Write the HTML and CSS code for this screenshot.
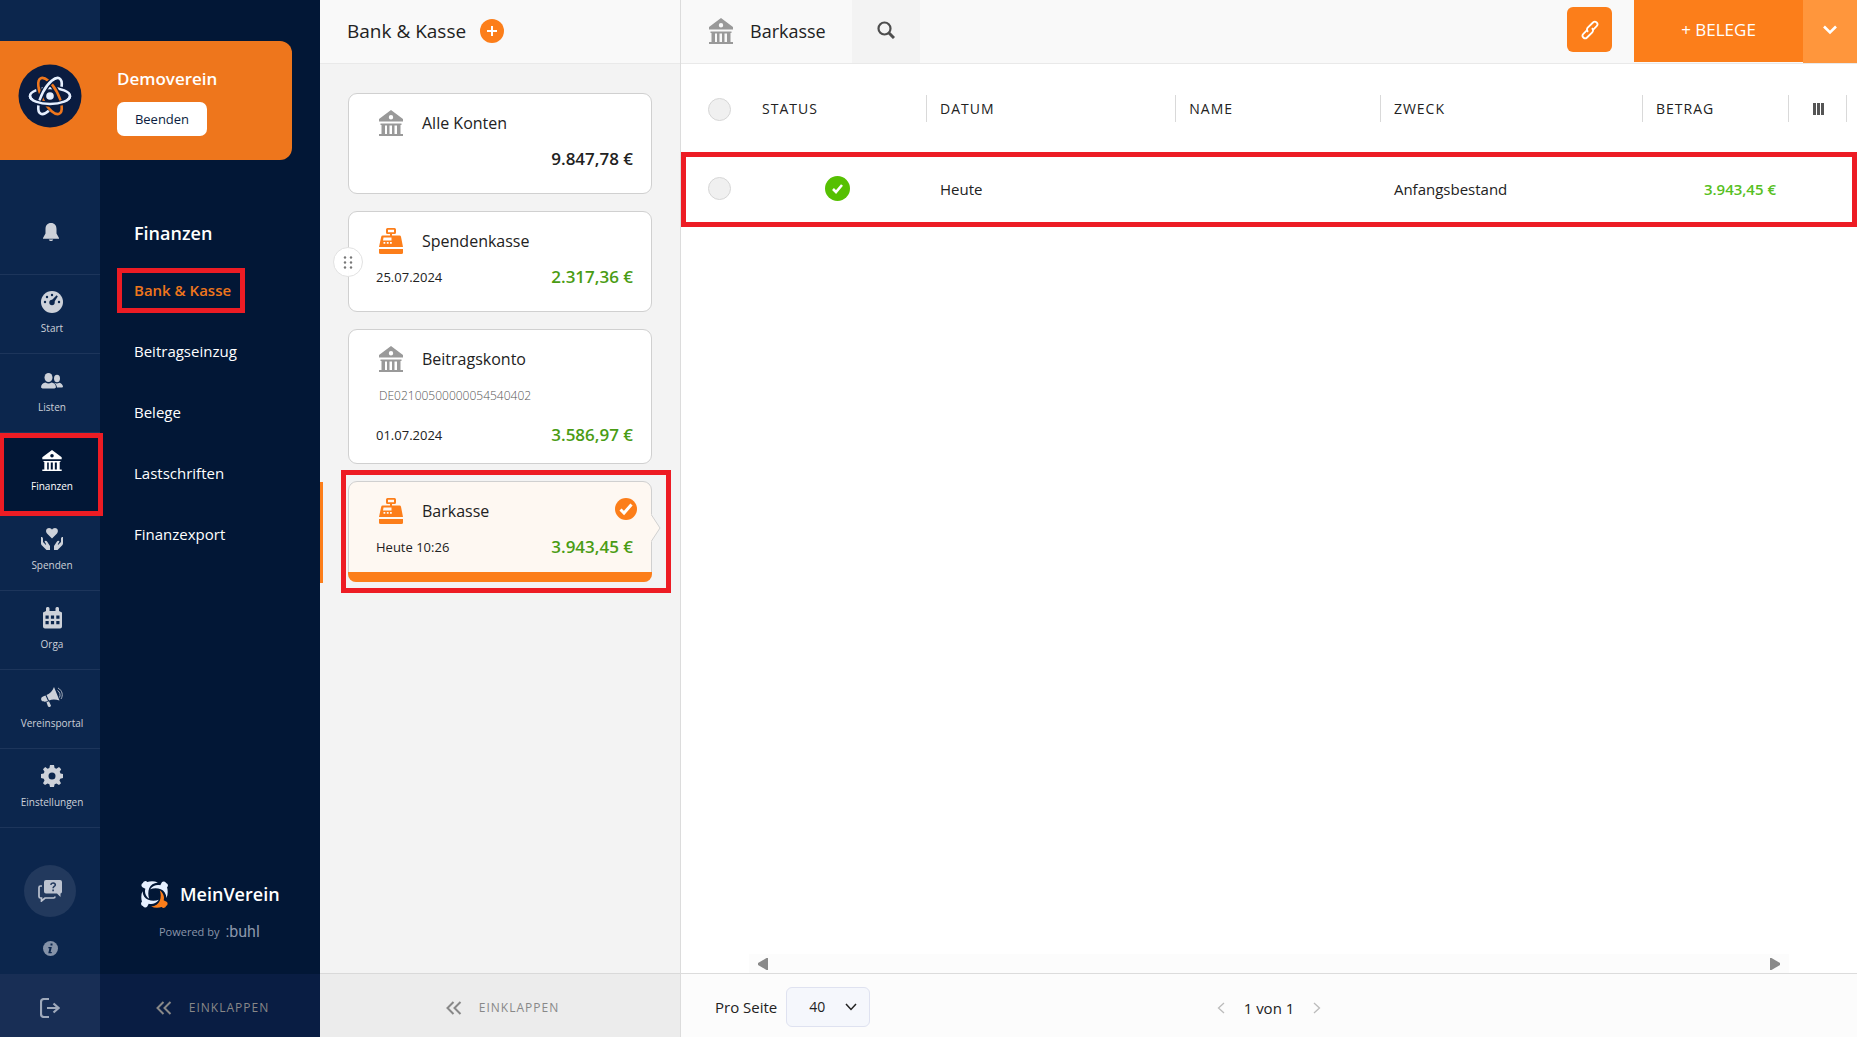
FILE: index.html
```html
<!DOCTYPE html>
<html lang="de">
<head>
<meta charset="utf-8">
<meta name="viewport" content="width=device-width, initial-scale=1">
<title>MeinVerein – Bank &amp; Kasse</title>
<link rel="stylesheet" href="styles.css">
</head>
<body>
<svg class="sprite" aria-hidden="true">
  <symbol id="bank" viewBox="0 0 24 26">
    <path fill-rule="evenodd" d="M12 0 24 9v2.600H0V9zM12 5a2.200 2.200 0 1 0 0 4.400A2.200 2.200 0 0 0 12 5z"/>
    <path d="M1.500 13.500h21V15h-1v9H24v2H0v-2h2.500v-9h-1zM6 15.500V24h2v-8.500zm4.500 0V24H13v-8.500zm5 0V24h2.500v-8.500z" fill-rule="evenodd"/>
  </symbol>
  <symbol id="register" viewBox="0 0 24 26">
    <path fill-rule="evenodd" d="M8.500 0h7A1.500 1.500 0 0 1 17 1.500v3A1.500 1.500 0 0 1 15.500 6H13v1.500h7.500a1.500 1.500 0 0 1 1.500 1.200L24 19H0L2.200 8.700a1.500 1.500 0 0 1 1.500-1.200H11V6H8.500A1.500 1.500 0 0 1 7 4.500v-3A1.500 1.500 0 0 1 8.500 0zM9 1.800v2.400h6V1.800zM4.500 9.500 4 12.500h8.500v-3zM4.500 14v1.800h1.800V14zm3.300 0v1.800h1.800V14zm3.200 0v1.800h1.800V14z"/>
    <path d="M0 21h24v3.500a1.500 1.500 0 0 1-1.500 1.500h-21A1.500 1.500 0 0 1 0 24.500z"/>
  </symbol>
  <symbol id="collapse" viewBox="0 0 16 14">
    <path d="M7.500 1 1.500 7l6 6M14.500 1l-6 6 6 6" fill="none" stroke="currentColor" stroke-width="2"/>
  </symbol>
  <symbol id="arm" viewBox="0 0 28 28">
    <path d="M19.500 9.500c4 3 5 7 4 10.500l3 1.500a2.600 2.600 0 0 1-.5 4.500 2.600 2.600 0 0 1-4.500 1C18 28 14 28 10.500 26.500c4.500-.5 7.500-2.500 9-6 1.300-3.500 1.200-7.500 0-11z"/>
  </symbol>
</svg>

<div class="app">
  <aside class="sidebar">
    <nav class="rail" aria-label="Hauptmenü">
      <a class="rail__bell" href="#" aria-label="Benachrichtigungen">
        <svg width="16" height="18" viewBox="0 0 16 18"><path d="M8 0c3.600 0 5.500 2.500 5.500 6v4.500L16 15v.8H0V15l2.500-4.500V6C2.500 2.500 4.400 0 8 0zM5.800 16.500h4.400C9.800 17.500 9 18 8 18s-1.800-.5-2.200-1.500z"/></svg>
      </a>
      <a class="rail__item" href="#">
        <svg width="22" height="22" viewBox="0 0 22 22"><circle cx="11" cy="11" r="11"/><g class="rail__cut"><circle cx="11" cy="11.500" r="2.700"/><path d="m10 10 5.600-5.800 1.200 1.200L12.500 12z"/><circle cx="11" cy="4" r="1.200"/><circle cx="6" cy="6" r="1.200"/><circle cx="4" cy="11" r="1.200"/><circle cx="18" cy="11" r="1.200"/></g></svg>
        <span>Start</span>
      </a>
      <a class="rail__item" href="#">
        <svg width="22" height="16" viewBox="0 0 22 16"><ellipse cx="7.500" cy="4.500" rx="4" ry="4.500"/><path d="M0 14.500c0-3 2-4.500 4.500-5 2 1.200 4 1.200 6 0 2.500.5 4.500 2 4.500 5l-1.500 1h-12z"/><ellipse cx="16" cy="5.500" rx="3" ry="3.700"/><path d="M12.800 9.700c2 .9 4 1 5.500 0 2 .5 3.700 1.800 3.700 4.300l-1 .5h-5c-.3-2-1.200-3.700-3.200-4.800z"/></svg>
        <span>Listen</span>
      </a>
      <a class="rail__item rail__item--active" href="#" aria-current="page">
        <svg width="20" height="21"><use href="#bank"/></svg>
        <span>Finanzen</span>
      </a>
      <a class="rail__item" href="#">
        <svg width="22" height="22" viewBox="0 0 22 22"><path d="M11 10.500 6 5.500C4 3 5.500 0 8 0c1.500 0 2.500.8 3 1.800C11.500.8 12.500 0 14 0c2.500 0 4 3 2 5.500z"/><path d="M0 9c1.500 0 2 .5 2 2v3l3 3c.6-.8-.8-2-1.500-3.500.8-1.200 2-.8 2.700.2L9 18v4H5.500L1 17.500C.2 16.700 0 16 0 15zM22 9c-1.500 0-2 .5-2 2v3l-3 3c-.6-.8.8-2 1.500-3.500-.8-1.200-2-.8-2.700.2L13 18v4h3.500l4.500-4.500c.8-.8 1-1.500 1-2.500z"/></svg>
        <span>Spenden</span>
      </a>
      <a class="rail__item" href="#">
        <svg width="19" height="22" viewBox="0 0 19 22"><path fill-rule="evenodd" d="M3 3V1.500C3 .5 3.700 0 4.700 0S6.500.5 6.500 1.500V4h6V1.500c0-1 .8-1.500 1.800-1.500S16 .5 16 1.500V4l3 1.500v14a2 2 0 0 1-2 2H2a2 2 0 0 1-2-2v-14L3 4zM2.500 8.500v3.200h3.200V8.500zm5.400 0v3.200h3.200V8.500zm5.400 0v3.200h3.200V8.500zM2.500 14v3.200h3.200V14zm5.400 0v3.200h3.200V14zm5.400 0v3.200h3.200V14z"/></svg>
        <span>Orga</span>
      </a>
      <a class="rail__item" href="#">
        <svg width="22" height="20" viewBox="0 0 22 20"><path d="M13 0l5.500 13.500C14.500 12 11 12 8 13.500L5.500 8C9 6.500 11.500 4 13 0zM4.500 8.500 7 14c-2.500 1-5 1-6.500-.5C-.5 11 .5 9.500 4.500 8.500zM5.500 15.200l2.500-1 2 4.500c-.5 1.300-2.200 1.600-3 .8z"/><path d="M16.500 3.500c2.500 1.500 3.200 4.500 2 7M17 1c4.500 2.500 5.300 7.500 3 11" fill="none" stroke="currentColor" stroke-width=".8"/></svg>
        <span>Vereinsportal</span>
      </a>
      <a class="rail__item" href="#">
        <svg width="22" height="22" viewBox="0 0 22 22"><path fill-rule="evenodd" d="M9 0h4l.6 3 1.800.8L18 2l2.200 2.200-1.500 2.500.8 1.900 2.500.4v4l-2.800.7-.7 1.800L20 18.200 18 20l-2.600-1.600-1.800.8L13 22H9l-.6-2.800-1.800-.8L4 20l-2-1.800 1.500-2.700-.7-1.800L0 13V9l2.700-.4.8-1.900L2 4.200 4.200 2l2.400 1.800L8.400 3zM11 7.500a3.500 3.500 0 1 0 0 7 3.500 3.500 0 0 0 0-7z"/></svg>
        <span>Einstellungen</span>
      </a>
      <div class="rail__bottom">
        <button class="help" type="button" aria-label="Hilfe">
          <svg width="24" height="22" viewBox="0 0 24 22"><path d="M8 0h14a2 2 0 0 1 2 2v9.500a2 2 0 0 1-1.500 2V17l-3.500-3.500H8a2 2 0 0 1-2-2V2a2 2 0 0 1 2-2z"/><path d="M4 6H2.500Q1 6 1 7.500v9Q1 18 2.500 18h1v3L7 18h8.500q1.500 0 1.500-1.500" fill="none" stroke="currentColor" stroke-width="1.700"/><path class="help__mark" d="M12.800 4.800c.3-2.600 4.800-2.300 4.500.2-.2 1.500-2.200 1.500-2.200 3.200M15.100 9.500v1.700"/></svg>
        </button>
        <a class="info" href="#" aria-label="Information">
          <svg width="15" height="15" viewBox="0 0 15 15"><circle cx="7.500" cy="7.500" r="7.500"/><path class="rail__cut" d="M7.500 2.500h2v2h-2zM5.500 6h3.300l-1.200 5h1.300l-.3 1.300H5.300L6.400 7.300H5.200z"/></svg>
        </a>
      </div>
      <button class="rail__logout" type="button" aria-label="Abmelden">
        <svg width="20" height="20" viewBox="0 0 20 20"><path d="M9 1H4Q1 1 1 4v12q0 3 3 3h5M7 10h11M13.500 5.500 18.500 10l-5 4.500" fill="none" stroke="currentColor" stroke-width="2.200"/></svg>
      </button>
    </nav>

    <nav class="submenu" aria-label="Finanzen">
      <h2 class="submenu__title">Finanzen</h2>
      <ul class="submenu__list">
        <li><a class="submenu__link submenu__link--active" href="#">Bank &amp; Kasse</a></li>
        <li><a class="submenu__link" href="#">Beitragseinzug</a></li>
        <li><a class="submenu__link" href="#">Belege</a></li>
        <li><a class="submenu__link" href="#">Lastschriften</a></li>
        <li><a class="submenu__link" href="#">Finanzexport</a></li>
      </ul>
      <div class="brand">
        <div class="brand__name">
          <svg width="27" height="27" viewBox="0 0 28 28">
            <g fill="#e6f0ff">
              <use href="#arm" width="28" height="28" transform="rotate(90 14 14)"/>
              <use href="#arm" width="28" height="28" transform="rotate(180 14 14)"/>
              <use href="#arm" width="28" height="28" transform="rotate(270 14 14)"/>
            </g>
            <use href="#arm" width="28" height="28" fill="#fc7e1a"/>
          </svg>
          <span>MeinVerein</span>
        </div>
        <div class="brand__by">Powered by <span class="brand__buhl">:buhl</span></div>
      </div>
      <button class="collapse collapse--dark" type="button"><svg width="16" height="14"><use href="#collapse"/></svg>EINKLAPPEN</button>
    </nav>

    <section class="club">
      <svg class="club__logo" width="64" height="64" viewBox="0 0 64 64">
        <circle cx="32" cy="32" r="31.500" fill="#0a1c40"/>
        <g fill="none" stroke-width="2.600">
          <ellipse cx="32" cy="32" rx="20" ry="8" stroke="#e6f0ff"/>
          <ellipse cx="32" cy="32" rx="20" ry="8" transform="rotate(62 32 32)" stroke="#0a1c40" stroke-width="5.500"/>
          <ellipse cx="32" cy="32" rx="20" ry="8" transform="rotate(62 32 32)" stroke="#ee761c"/>
          <ellipse cx="32" cy="32" rx="20" ry="8" transform="rotate(118 32 32)" stroke="#0a1c40" stroke-width="5.500" pathLength="100" stroke-dasharray="42 58" stroke-dashoffset="-4"/>
          <ellipse cx="32" cy="32" rx="20" ry="8" transform="rotate(118 32 32)" stroke="#e6f0ff" pathLength="100" stroke-dasharray="70 30" stroke-dashoffset="10"/>
          <path d="M50 35.500c-2.500 2.800-9.500 4.500-18 4.500s-15.500-1.700-18-4.500" stroke="#0a1c40" stroke-width="5.500"/>
          <path d="M52 32c0 4.400-9 8-20 8s-20-3.600-20-8" stroke="#e6f0ff"/>
        </g>
        <circle cx="32" cy="32" r="3.800" fill="#e6f0ff"/>
      </svg>
      <div class="club__body">
        <strong class="club__name">Demoverein</strong>
        <button class="club__exit" type="button">Beenden</button>
      </div>
    </section>
  </aside>

  <section class="accounts">
    <header class="accounts__head">
      <h1 class="heading">Bank &amp; Kasse</h1>
      <button class="add" type="button" aria-label="Konto hinzufügen"><svg width="10" height="10" viewBox="0 0 10 10"><path d="M5 0v10M0 5h10" stroke="#fff" stroke-width="2"/></svg></button>
    </header>
    <div class="accounts__list">
      <article class="card">
        <div class="card__row card__row--title"><svg class="card__icon" width="24" height="26"><use href="#bank"/></svg><h3 class="card__title">Alle Konten</h3></div>
        <div class="card__row card__row--end"><span class="card__sum card__sum--total">9.847,78 €</span></div>
      </article>
      <article class="card">
        <button class="card__drag" type="button" aria-label="Verschieben"><svg width="10" height="13" viewBox="0 0 10 13"><g fill="#777"><circle cx="2" cy="1.500" r="1.200"/><circle cx="8" cy="1.500" r="1.200"/><circle cx="2" cy="6.500" r="1.200"/><circle cx="8" cy="6.500" r="1.200"/><circle cx="2" cy="11.500" r="1.200"/><circle cx="8" cy="11.500" r="1.200"/></g></svg></button>
        <div class="card__row card__row--title"><svg class="card__icon card__icon--cash" width="24" height="26"><use href="#register"/></svg><h3 class="card__title">Spendenkasse</h3></div>
        <div class="card__row"><span class="card__date">25.07.2024</span><span class="card__sum">2.317,36 €</span></div>
      </article>
      <article class="card">
        <div class="card__row card__row--title"><svg class="card__icon" width="24" height="26"><use href="#bank"/></svg><h3 class="card__title">Beitragskonto</h3></div>
        <div class="card__row card__row--iban">DE02100500000054540402</div>
        <div class="card__row"><span class="card__date">01.07.2024</span><span class="card__sum">3.586,97 €</span></div>
      </article>
      <article class="card card--active">
        <div class="card__row card__row--title"><svg class="card__icon card__icon--cash" width="24" height="26"><use href="#register"/></svg><h3 class="card__title">Barkasse</h3></div>
        <div class="card__row"><span class="card__date">Heute 10:26</span><span class="card__sum">3.943,45 €</span></div>
        <svg class="card__check" width="22" height="22" viewBox="0 0 22 22"><circle cx="11" cy="11" r="11" fill="#fc7e1a"/><path d="m5.500 11.500 3.500 3.500 7.500-8.500" fill="none" stroke="#fff" stroke-width="3"/></svg>
        <svg class="card__arrow" width="10" height="28" viewBox="0 0 10 28"><path d="M0 0 9 14 0 28z" fill="#fef8f2"/><path d="M.5 1 9 14 .5 27" fill="none" stroke="#d0d0d0"/></svg>
      </article>
    </div>
    <button class="collapse" type="button"><svg width="16" height="14"><use href="#collapse"/></svg>EINKLAPPEN</button>
  </section>

  <main class="main">
    <header class="toolbar">
      <div class="toolbar__title"><svg class="card__icon" width="24" height="26"><use href="#bank"/></svg><h2 class="heading heading--account">Barkasse</h2></div>
      <button class="toolbar__search" type="button" aria-label="Suchen"><svg width="18" height="18" viewBox="0 0 18 18"><circle cx="7.500" cy="7.500" r="6" fill="none" stroke="#4d4d4d" stroke-width="2.200"/><path d="m12 12 5 5" stroke="#4d4d4d" stroke-width="3"/></svg></button>
      <button class="toolbar__link" type="button" aria-label="Verknüpfen"><svg width="20" height="20" viewBox="0 0 20 20"><g transform="rotate(-45 10 10)" fill="none" stroke="#fff" stroke-width="1.800"><path d="M12.500 10A2.600 2.600 0 0 1 10 13.200H2.600A2.600 2.600 0 0 1 2.600 8H8.500"/><path d="M7.500 10A2.600 2.600 0 0 1 10 6.800H17.400A2.600 2.600 0 0 1 17.400 12H11.500"/></g></svg></button>
      <button class="toolbar__new" type="button">+ BELEGE</button>
      <button class="toolbar__more" type="button" aria-label="Weitere Aktionen"><svg width="14" height="10" viewBox="0 0 14 10"><path d="m1 1.500 6 6 6-6" fill="none" stroke="#fff" stroke-width="2.600"/></svg></button>
    </header>

    <div class="bookings">
      <table class="table">
        <colgroup><col class="col-pick"><col class="col-status"><col class="col-date"><col class="col-name"><col><col class="col-sum"><col class="col-tools"><col class="col-end"></colgroup>
        <thead>
          <tr>
            <th><input class="pick" type="checkbox" aria-label="Alle auswählen"></th>
            <th>STATUS</th>
            <th class="split">DATUM</th>
            <th class="split">NAME</th>
            <th class="split">ZWECK</th>
            <th class="split">BETRAG</th>
            <th class="split"><button class="columns" type="button" aria-label="Spalten"><svg width="11" height="12" viewBox="0 0 11 12"><path d="M0 0h3v12H0zM4 0h3v12H4zM8 0h3v12H8z" fill="#555"/></svg></button></th>
            <th class="split"></th>
          </tr>
        </thead>
        <tbody>
          <tr class="table__row">
            <td><input class="pick" type="checkbox" aria-label="Buchung auswählen"></td>
            <td class="table__status"><svg width="25" height="25" viewBox="0 0 25 25"><circle cx="12.500" cy="12.500" r="12.500" fill="#56c002"/><path d="m8 13 3 3 6-7" fill="none" stroke="#fff" stroke-width="2.600"/></svg></td>
            <td>Heute</td>
            <td></td>
            <td>Anfangsbestand</td>
            <td class="table__sum">3.943,45 €</td>
            <td></td>
            <td></td>
          </tr>
        </tbody>
      </table>
      <div class="hscroll">
        <svg width="10" height="12" viewBox="0 0 10 12"><path d="M10 0v12H8.500L0 7V5l8.500-5z" fill="#8a8a8a"/></svg>
        <svg width="10" height="12" viewBox="0 0 10 12"><path d="M0 0v12h1.500L10 7V5L1.500 0z" fill="#8a8a8a"/></svg>
      </div>
    </div>

    <footer class="pager">
      <div class="pager__size">
        <label for="size">Pro Seite</label>
        <span class="select">
          <select class="select__box" id="size"><option>40</option></select>
          <svg class="select__chevron" width="12" height="8" viewBox="0 0 12 8"><path d="m1 1 5 5.500L11 1" fill="none" stroke="#222" stroke-width="1.500"/></svg>
        </span>
      </div>
      <div class="pager__nav">
        <button class="pager__step" type="button" aria-label="Zurück"><svg width="8" height="12" viewBox="0 0 8 12"><path d="M7 1 1.500 6 7 11" fill="none" stroke="#bbb" stroke-width="1.300"/></svg></button>
        <span>1 von 1</span>
        <button class="pager__step" type="button" aria-label="Weiter"><svg width="8" height="12" viewBox="0 0 8 12"><path d="m1 1 5.500 5L1 11" fill="none" stroke="#bbb" stroke-width="1.300"/></svg></button>
      </div>
    </footer>
  </main>
</div>
</body>
</html>
```

FILE: styles.css
```css
:root {
  --navy: #021736;
  --rail: #0c264d;
  --orange: #fc7e1a;
  --marker: #ed1c24;
  --head: 64px;
  --foot: 63px;
}

*, *::before, *::after { box-sizing: border-box; }

body {
  margin: 0;
  font-family: "Open Sans", "Noto Sans", sans-serif;
  font-size: 15px;
  line-height: 20px;
  color: #222;
}

h1, h2, h3, ul { margin: 0; padding: 0; font-weight: 400; list-style: none; }
a { color: inherit; text-decoration: none; }
svg { display: block; fill: currentColor; flex: none; }
button {
  display: flex;
  align-items: center;
  justify-content: center;
  border: 0;
  padding: 0;
  background: none;
  color: inherit;
  font: inherit;
  cursor: pointer;
}
.sprite { position: absolute; width: 0; height: 0; }
symbol { fill: inherit; }

.app {
  display: grid;
  grid-template-columns: 320px 361px minmax(0, 1fr);
  min-height: 100vh;
}

/* Sidebar */
.sidebar {
  display: grid;
  grid-template-columns: 100px 1fr;
  grid-template-rows: 1fr;
}
.rail, .submenu { grid-row: 1; display: flex; flex-direction: column; }
.rail {
  grid-column: 1;
  padding-top: 190px;
  background: var(--rail);
  color: #cdd1d9;
}
.rail__bell {
  display: grid;
  place-items: center;
  height: 85px;
  padding-left: 2px;
  border-bottom: 1px solid #1d355b;
}
.rail__item {
  position: relative;
  display: grid;
  grid-template-rows: 22px 20px;
  row-gap: 5px;
  place-items: center;
  height: 79px;
  padding: 16px 0 15px 4px;
  border-bottom: 1px solid #1d355b;
  font-size: 10px;
}
.rail__item--active { background: var(--navy); color: #fff; }
.rail__item--active::after {
  content: "";
  position: absolute;
  z-index: 2;
  inset: 0 -3px -5px 0;
  border: 5px solid var(--marker);
  border-left-width: 4px;
}
.rail__cut { fill: var(--rail); }
.rail__bottom {
  flex: 1;
  display: flex;
  flex-direction: column;
  align-items: center;
  justify-content: flex-end;
  gap: 24px;
  padding-bottom: 18px;
}
.help { width: 52px; height: 52px; border-radius: 50%; background: #22395d; color: #bcc3d0; }
.help__mark { fill: none; stroke: #22395d; stroke-width: 1.600; }
.info { color: #8592a8; }
.rail__logout { height: var(--foot); padding-top: 4px; background: #182e55; color: #9fa9bb; }

.submenu { grid-column: 2; padding-top: 218px; background: var(--navy); color: #fff; }
.submenu__title { padding-left: 34px; font-size: 18px; font-weight: 600; line-height: 30px; }
.submenu__list { flex: 1; display: grid; gap: 16px; align-content: start; padding: 20px 0 0 17px; }
.submenu__link {
  display: inline-block;
  padding: 7px 9px 8px 12px;
  border: 5px solid transparent;
  font-weight: 500;
  vertical-align: top;
}
.submenu__link--active { border-color: var(--marker); color: #ee761c; font-weight: 600; }
.brand { display: grid; gap: 14px; padding: 0 0 32px 41px; }
.brand__name { display: flex; align-items: center; gap: 12px; font-size: 18px; font-weight: 600; line-height: 28px; }
.brand__by { display: flex; align-items: center; gap: 6px; padding-left: 18px; font-size: 11px; color: #8b96aa; }
.brand__buhl { font-family: Roboto, sans-serif; font-size: 16px; }

.collapse { gap: 17px; height: 64px; padding: 4px 0 0 5px; border-top: 1px solid #d9d9d9; background: #ececec; color: #888; font-size: 12px; letter-spacing: 1px; }
.collapse--dark { height: var(--foot); border: 0; background: #091d43; }

.club {
  grid-column: 1 / -1;
  grid-row: 1;
  align-self: start;
  z-index: 1;
  display: flex;
  align-items: center;
  gap: 35px;
  height: 119px;
  margin: 41px 28px 0 0;
  padding: 0 18px 10px;
  border-radius: 0 12px 12px 0;
  background: #ee761c;
  color: #fff;
}
.club__body { display: grid; gap: 13px; padding-top: 14px; justify-items: start; }
.club__name { font-size: 17px; font-weight: 600; line-height: 20px; }
.club__exit { width: 90px; height: 34px; border-radius: 7px; background: #fff; color: #0a1c40; font-size: 13px; }

/* Accounts */
.accounts { display: flex; flex-direction: column; border-right: 1px solid #dcdcdc; background: #f3f3f3; }
.accounts__head {
  display: flex;
  align-items: center;
  gap: 14px;
  height: var(--head);
  padding: 0 27px 2px;
  border-bottom: 1px solid #e9e9e9;
  background: #f9f9f9;
}
.heading { font-size: 19px; font-weight: 500; line-height: 24px; }
.heading--account { font-size: 18px; }
.add { width: 24px; height: 24px; border-radius: 50%; background: var(--orange); }
.accounts__list { flex: 1; display: flex; flex-direction: column; gap: 17px; padding: 29px 28px 28px; }
.card {
  position: relative;
  min-height: 101px;
  padding: 11px 18px 10px 27px;
  border: 1px solid #d0d0d0;
  border-radius: 9px;
  background: #fff;
}
.card__row { display: flex; align-items: center; justify-content: space-between; height: 36px; }
.card__row--title { justify-content: flex-start; gap: 19px; padding-left: 3px; }
.card__row--end { justify-content: flex-end; }
.card__row--iban { height: 38px; margin-bottom: 2px; padding-left: 3px; font-size: 12px; font-weight: 300; color: #555; }
.card__icon { color: #999; }
.card__icon--cash { color: var(--orange); }
.card__title { font-size: 16px; font-weight: 500; }
.card__date { font-size: 13px; }
.card__sum { font-size: 17px; font-weight: 600; color: #4a9c14; }
.card__sum--total { color: #222; }
.card__drag {
  position: absolute;
  top: 35px;
  left: -16px;
  width: 30px;
  height: 30px;
  border: 1px solid #e2e2e2;
  border-radius: 50%;
  background: #fffffff0;
}
.card--active { background: #fef8f2; }
.card--active::before {
  content: "";
  position: absolute;
  inset: auto -1px -1px;
  height: 10px;
  border-radius: 0 0 8px 8px;
  background: var(--orange);
}
.card--active::after {
  content: "";
  position: absolute;
  inset: -12px -20px -12px -8px;
  border: 5px solid var(--marker);
}
/* Tab on the panel's left edge, beside the selected account */
.card--active .card__row--title::before {
  content: "";
  position: absolute;
  top: 0;
  left: -29px;
  width: 3px;
  height: 101px;
  background: var(--orange);
}
.card__check { position: absolute; top: 16px; right: 14px; }
.card__arrow { position: absolute; top: 32px; right: -10px; }

/* Main */
.main { display: flex; flex-direction: column; background: #fff; }
.toolbar {
  display: flex;
  height: var(--head);
  border-bottom: 1px solid #e9e9e9;
  background: #f9f9f9;
}
.toolbar__title { display: flex; align-items: center; gap: 17px; padding: 0 26px 2px 28px; }
.toolbar__search { width: 68px; padding-bottom: 3px; background: #f3f3f3; }
.toolbar__link { width: 45px; height: 45px; margin: 7px 22px 0 auto; border-radius: 6px; background: var(--orange); }
.toolbar__new { width: 169px; height: 62px; padding-bottom: 3px; background: var(--orange); color: #fff; font-size: 17px; }
.toolbar__more { width: 54px; padding-bottom: 4px; background: #ff963c; }

.bookings { flex: 1; display: flex; flex-direction: column; justify-content: space-between; }
.table { width: 100%; table-layout: fixed; border-collapse: collapse; }
.col-pick { width: 67px; }
.col-status { width: 178px; }
.col-date { width: 21.200%; }
.col-name { width: 17.400%; }
.col-sum { width: 146px; }
.col-tools { width: 58px; }
.col-end { width: 11px; }
.table th, .table td { padding: 0 0 0 14px; text-align: left; font-weight: 400; }
.table th { height: 88px; padding-top: 2px; font-size: 14px; font-weight: 500; letter-spacing: 1px; }
.table .split { background: linear-gradient(#d9d9d9, #d9d9d9) 0 50% / 1px 27px no-repeat; }
.table th:first-child, .table td:first-child { padding-left: 27px; }
.table td { height: 75px; padding-bottom: 2px; }
.table td:first-child, .table .table__status { padding-bottom: 3px; }
.table th:last-child, .table td:last-child { padding: 0; }
.table__row { outline: 5px solid var(--marker); outline-offset: -5px; }
.table .table__status { padding-left: 77px; }
.table .table__sum { padding-right: 12px; text-align: right; font-weight: 600; color: #56c022; }
.pick {
  display: block;
  appearance: none;
  width: 23px;
  height: 23px;
  margin: 0;
  border: 1px solid #d6d6d6;
  border-radius: 50%;
  background: #f0f0f0;
}
.columns { width: 32px; height: 20px; }
.hscroll { display: flex; align-items: center; justify-content: space-between; height: 19px; margin: 0 68px; padding: 0 9px; background: #fcfcfc; }

.pager {
  display: grid;
  grid-template-columns: 1fr auto 1fr;
  align-items: center;
  height: 64px;
  padding: 3px 34px 0;
  border-top: 1px solid #dcdcdc;
  background: #fcfcfc;
}
.pager__size { display: flex; align-items: center; gap: 9px; }
.select { display: grid; }
.select__box {
  grid-area: 1 / 1;
  appearance: none;
  width: 84px;
  height: 40px;
  padding: 0 22px;
  border: 1px solid #dfe2f0;
  border-radius: 6px;
  background: #f5f7fc;
  color: #222;
  font: inherit;
  font-size: 14px;
}
.select__chevron { grid-area: 1 / 1; align-self: center; justify-self: end; margin-right: 13px; pointer-events: none; }
.pager__nav { display: flex; align-items: center; gap: 19px; padding-top: 2px; }
```
